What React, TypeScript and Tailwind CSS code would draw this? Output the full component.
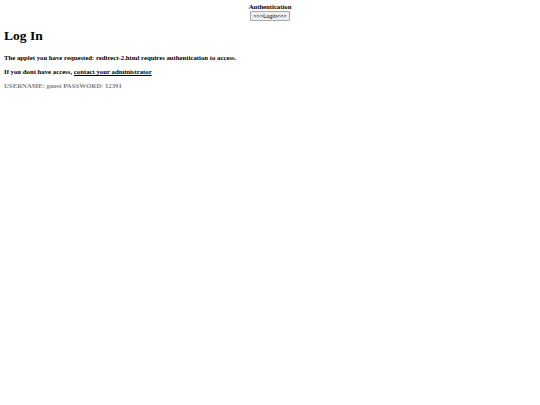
export default function App() {
  return (
    <div className="min-h-[405px] bg-white text-black px-[4px]" style={{ fontFamily: '"Liberation Serif", serif' }}>
      <div className="flex flex-col items-center pt-[3px]">
        <div className="text-[6.7px] font-bold leading-[8px]">Authentication</div>
        <button className="text-[5.6px] leading-[6px] px-[2.5px] py-[1px] border border-[#a8a8a8] bg-[#efefef] rounded-[1px]" style={{ fontFamily: '"Liberation Sans", sans-serif' }}>
          &gt;&gt;&gt;Login&lt;&lt;&lt;
        </button>
      </div>
      <h1 className="text-[13.5px] font-bold mt-[8px] leading-[14px]">Log In</h1>
      <p className="text-[6.75px] font-bold mt-[11px] leading-[7px]">The applet you have requested: redirect-2.html requires authentication to access.</p>
      <p className="text-[6.75px] font-bold mt-[7px] leading-[7px]">If you dont have access, <span className="underline">contact your administrator</span></p>
      <p className="text-[6.75px] font-bold mt-[7px] leading-[7px] text-[#808080]">USERNAME: guest PASSWORD: 12391</p>
    </div>
  );
}
